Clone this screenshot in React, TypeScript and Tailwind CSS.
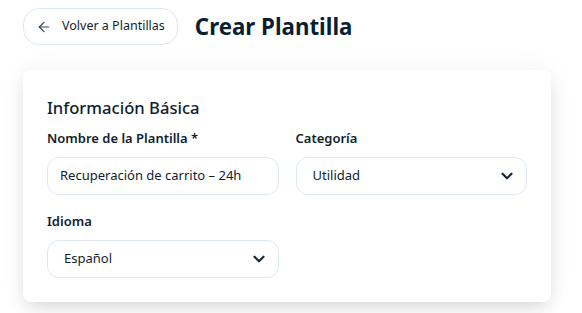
import { ArrowLeft, ChevronDown } from "lucide-react";

const FONT = "font-['Noto_Sans','Open_Sans',sans-serif]";

function Field({ label, children }: { label: string; children: React.ReactNode }) {
  return (
    <div className="flex flex-col">
      <label className="mb-[9px] text-[13px] leading-5 font-semibold text-[#0f1e2e]">{label}</label>
      {children}
    </div>
  );
}

function SelectBox({ value }: { value: string }) {
  return (
    <div className="flex h-[38px] items-center justify-between rounded-xl border border-[#dde8f4] bg-white pl-4 pr-2.5 text-[13px] text-[#0f1e2e]">
      <span>{value}</span>
      <ChevronDown className="h-[18px] w-[18px] text-[#1a2a3a]" strokeWidth={3} />
    </div>
  );
}

export default function App() {
  return (
    <div className={`${FONT} min-h-screen bg-white px-[23px] pt-2`}>
      <div className="flex items-center gap-[17px]">
        <button className="flex h-[37px] items-center gap-2.5 rounded-2xl border border-[#dde8f4] bg-white pl-3 pr-3 text-[12.5px] text-[#0f1e2e]">
          <ArrowLeft className="h-4 w-4 text-[#334155]" strokeWidth={1.75} />
          Volver a Plantillas
        </button>
        <h1 className="text-[22.3px] font-bold text-[#0b1f33]">Crear Plantilla</h1>
      </div>

      <div className="mt-[25px] w-[528px] rounded-lg bg-white p-6 shadow-[0_8px_18px_-4px_rgba(0,0,0,0.15),0_0_28px_rgba(0,0,0,0.05)]">
        <h2 className="mb-1.5 text-[16.6px] leading-7 font-medium text-[#0f1e2e]">Información Básica</h2>
        <div className="grid grid-cols-2 gap-x-[17px] gap-y-4">
          <Field label="Nombre de la Plantilla *">
            <div className="flex h-[38px] items-center rounded-xl border border-[#dde8f4] bg-white px-3 text-[13px] text-[#0f1e2e]">
              Recuperación de carrito – 24h
            </div>
          </Field>
          <Field label="Categoría">
            <SelectBox value="Utilidad" />
          </Field>
          <Field label="Idioma">
            <SelectBox value="Español" />
          </Field>
        </div>
      </div>
    </div>
  );
}
